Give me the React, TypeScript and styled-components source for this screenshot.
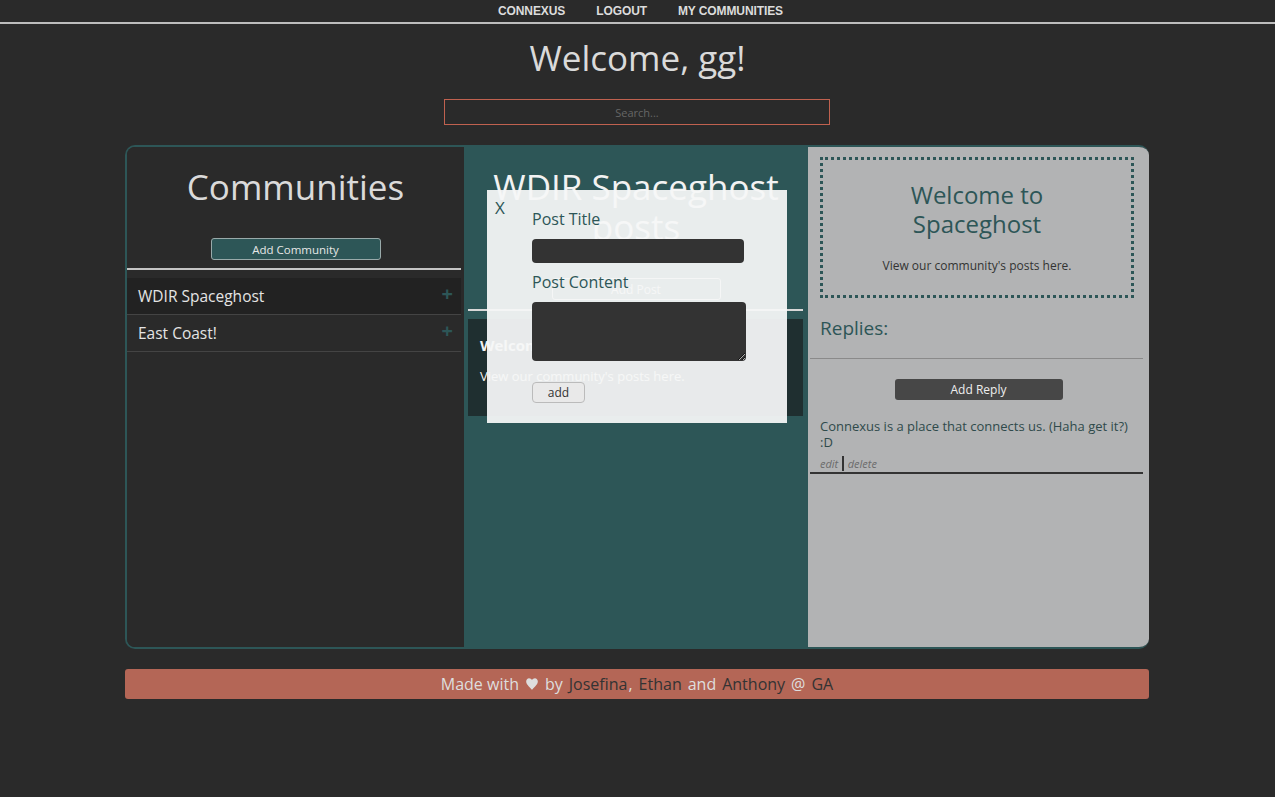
import React from "react";
import styled, { createGlobalStyle } from "styled-components";

const GlobalStyle = createGlobalStyle`
  html, body { margin: 0; padding: 0; }
  body {
    background: #2a2a2a;
    font-family: "Open Sans", "Noto Sans", sans-serif;
    color: #ddd;
  }
  * { box-sizing: border-box; }
`;

const TEAL = "#2d5657";

const Nav = styled.nav`
  height: 24px;
  border-bottom: 2px solid #bdbdbd;
  display: flex;
  justify-content: center;
  align-items: center;
  gap: 31px;
  padding-left: 6px;
`;

const NavLink = styled.a`
  font-family: "Liberation Sans", Arial, sans-serif;
  font-weight: 700;
  font-size: 12px;
  color: #dcdcdc;
  text-decoration: none;
  letter-spacing: -0.1px;
`;

const Welcome = styled.h1`
  margin: 14px 0 0;
  text-align: center;
  font-weight: 400;
  font-size: 35px;
  line-height: 40px;
  color: #dadada;
`;

const SearchRow = styled.div`
  display: flex;
  justify-content: center;
  margin-top: 21px;
`;

const Search = styled.input`
  width: 386px;
  height: 26px;
  background: transparent;
  border: 1px solid #c0614f;
  text-align: center;
  font-family: inherit;
  font-size: 11px;
  color: #ddd;
  outline: none;
  margin-right: 1px;
  &::placeholder { color: #666; }
`;

const Page = styled.div`
  width: 1024px;
  margin: 20px 0 0 125px;
`;

const Panel = styled.main`
  height: 504px;
  border: 2px solid ${TEAL};
  border-right: none;
  border-radius: 10px;
  overflow: hidden;
  display: grid;
  grid-template-columns: 337px 344px 1fr;
`;

const LeftCol = styled.section`
  background: #2a2a2a;
  display: flex;
  flex-direction: column;
`;

const ColTitle = styled.h2<{ $light?: boolean }>`
  margin: 20px 0 0;
  text-align: center;
  font-weight: 400;
  font-size: 35px;
  line-height: 40px;
  color: ${(p) => (p.$light ? "#f2f2f2" : "#dadada")};
`;

const CenterRow = styled.div<{ $mt: number }>`
  display: flex;
  justify-content: center;
  margin-top: ${(p) => p.$mt}px;
`;

const TealButton = styled.button`
  width: 170px;
  height: 22px;
  background: ${TEAL};
  border: 1px solid #9aa;
  border-radius: 3px;
  color: #e6e6e6;
  font-family: inherit;
  font-size: 11.5px;
  padding: 0;
`;

const Rule = styled.hr<{ $color: string; $h: number; $mt: number; $ml?: number; $mr?: number }>`
  border: none;
  height: ${(p) => p.$h}px;
  background: ${(p) => p.$color};
  margin: ${(p) => p.$mt}px ${(p) => p.$mr ?? 0}px 0 ${(p) => p.$ml ?? 0}px;
`;

const List = styled.ul`
  list-style: none;
  margin: 8px 3px 0 0;
  padding: 0;
`;

const ListItem = styled.li<{ $active?: boolean }>`
  height: 37px;
  display: flex;
  align-items: center;
  justify-content: space-between;
  padding: 0 8px 0 11px;
  background: ${(p) => (p.$active ? "#222" : "transparent")};
  border-bottom: 1px solid #444;
  font-size: 15.5px;
  color: #e4e4e4;
`;

const Plus = styled.span`
  color: ${TEAL};
  font-size: 20px;
  font-weight: 700;
  line-height: 1;
  margin-top: -4px;
`;

const MidCol = styled.section`
  background: ${TEAL};
  position: relative;
  display: flex;
  flex-direction: column;
`;

const GhostButton = styled.button`
  width: 169px;
  height: 22px;
  background: transparent;
  border: 1px solid #e6e6e6;
  border-radius: 3px;
  color: #f0f0f0;
  font-family: inherit;
  font-size: 12px;
  padding: 0;
`;

const PostCard = styled.article`
  margin: 8px 5px 0 4px;
  height: 97px;
  background: #1f2f30;
  padding: 14px 12px;
  color: #f2f2f2;
`;

const PostTitle = styled.h3`
  margin: 0;
  font-size: 15px;
  font-weight: 700;
  line-height: 24px;
`;

const PostText = styled.p`
  margin: 10px 0 0;
  font-size: 13px;
  line-height: 18px;
`;

const Modal = styled.div`
  position: absolute;
  left: 23px;
  top: 43px;
  width: 300px;
  height: 233px;
  background: rgba(245, 246, 246, 0.94);
  padding: 19px 0 0 45px;
`;

const Close = styled.span`
  position: absolute;
  left: 8px;
  top: 8px;
  color: ${TEAL};
  font-size: 17px;
  line-height: 20px;
`;

const Label = styled.label`
  display: block;
  color: ${TEAL};
  font-size: 16px;
  line-height: 20px;
`;

const DarkInput = styled.input`
  display: block;
  width: 212px;
  height: 24px;
  margin: 10px 0 9px;
  background: #333;
  border: none;
  border-radius: 4px;
`;

const DarkArea = styled.textarea`
  display: block;
  width: 214px;
  height: 59px;
  margin: 10px 0 19px;
  background: #333;
  border: none;
  border-radius: 4px;
  resize: vertical;
`;

const AddBtn = styled.button`
  width: 53px;
  height: 21px;
  background: #e9e9e9;
  border: 1px solid #bbb;
  border-radius: 4px;
  font-family: inherit;
  font-size: 12px;
  color: #333;
  padding: 0;
`;

const RightCol = styled.section`
  background: #b2b3b4;
  display: flex;
  flex-direction: column;
`;

const WelcomeBox = styled.div`
  margin: 10px 15px 0 12px;
  height: 141px;
  border: 3px dotted ${TEAL};
  display: flex;
  flex-direction: column;
  align-items: center;
  padding-top: 20px;
`;

const BoxTitle = styled.h2`
  margin: 0;
  text-align: center;
  font-weight: 400;
  font-size: 24px;
  line-height: 29px;
  color: ${TEAL};
`;

const BoxText = styled.p`
  margin: 19px 0 0;
  font-size: 12px;
  color: #333;
`;

const Replies = styled.h3`
  margin: 18px 0 0 12px;
  font-weight: 400;
  font-size: 19px;
  line-height: 24px;
  color: ${TEAL};
`;

const ReplyButton = styled.button`
  width: 168px;
  height: 21px;
  background: #474747;
  border: none;
  border-radius: 3px;
  color: #eee;
  font-family: inherit;
  font-size: 12px;
  font-weight: 500;
  padding: 0;
`;

const ReplyText = styled.p`
  margin: 18px 10px 0 12px;
  font-size: 13px;
  line-height: 16px;
  color: #2f4a4b;
`;

const ReplyActions = styled.div`
  margin: 6px 0 0 12px;
  display: flex;
  align-items: center;
  gap: 4px;
  font-size: 11px;
  font-style: italic;
  color: #6c6c6c;
  line-height: 14px;
`;

const Bar = styled.span`
  width: 1.5px;
  height: 15px;
  background: #333;
`;

const Footer = styled.footer`
  height: 30px;
  margin-top: 20px;
  background: #b46656;
  border-radius: 3px;
  display: flex;
  align-items: center;
  justify-content: center;
  gap: 6px;
  font-size: 16px;
  color: #dedede;
`;

const Name = styled.span`
  color: #333;
`;

const Comma = styled.span`
  margin-left: -5px;
`;

const Heart = () => (
  <svg width="14" height="14" viewBox="0 0 24 24" aria-hidden>
    <path
      d="M12 22 C10 19 2 13 2 7.5 C2 4.4 4.3 2 7 2 C9 2 11 3.3 12 5.2 C13 3.3 15 2 17 2 C19.7 2 22 4.4 22 7.5 C22 13 14 19 12 22 Z"
      fill="#dedede"
    />
  </svg>
);

export default function App() {
  return (
    <>
      <GlobalStyle />
      <Nav>
        <NavLink>CONNEXUS</NavLink>
        <NavLink>LOGOUT</NavLink>
        <NavLink>MY COMMUNITIES</NavLink>
      </Nav>
      <Welcome>Welcome, gg!</Welcome>
      <SearchRow>
        <Search placeholder="Search..." />
      </SearchRow>
      <Page>
        <Panel>
          <LeftCol>
            <ColTitle>Communities</ColTitle>
            <CenterRow $mt={31}>
              <TealButton>Add Community</TealButton>
            </CenterRow>
            <Rule $color="#c4c4c4" $h={2} $mt={8} $mr={3} />
            <List>
              <ListItem $active>
                WDIR Spaceghost <Plus>+</Plus>
              </ListItem>
              <ListItem>
                East Coast! <Plus>+</Plus>
              </ListItem>
            </List>
          </LeftCol>
          <MidCol>
            <ColTitle $light>WDIR Spaceghost posts</ColTitle>
            <CenterRow $mt={31}>
              <GhostButton>Add Post</GhostButton>
            </CenterRow>
            <Rule $color="#d8d8d8" $h={2} $mt={9} $ml={4} $mr={5} />
            <PostCard>
              <PostTitle>Welcome to Spaceghost</PostTitle>
              <PostText>View our community's posts here.</PostText>
            </PostCard>
            <Modal>
              <Close>X</Close>
              <Label>Post Title</Label>
              <DarkInput />
              <Label>Post Content</Label>
              <DarkArea />
              <AddBtn>add</AddBtn>
            </Modal>
          </MidCol>
          <RightCol>
            <WelcomeBox>
              <BoxTitle>
                Welcome to
                <br />
                Spaceghost
              </BoxTitle>
              <BoxText>View our community's posts here.</BoxText>
            </WelcomeBox>
            <Replies>Replies:</Replies>
            <Rule $color="#8a8a8a" $h={1} $mt={18} $ml={2} $mr={6} />
            <CenterRow $mt={20}>
              <ReplyButton>Add Reply</ReplyButton>
            </CenterRow>
            <ReplyText>Connexus is a place that connects us. (Haha get it?) :D</ReplyText>
            <ReplyActions>
              <span>edit</span>
              <Bar />
              <span>delete</span>
            </ReplyActions>
            <Rule $color="#333" $h={1.5} $mt={1} $ml={2} $mr={6} />
          </RightCol>
        </Panel>
        <Footer>
          <span>Made with</span>
          <Heart />
          <span>by</span>
          <Name>Josefina</Name>
          <Comma>,</Comma>
          <Name>Ethan</Name>
          <span>and</span>
          <Name>Anthony</Name>
          <span>@</span>
          <Name>GA</Name>
        </Footer>
      </Page>
    </>
  );
}
